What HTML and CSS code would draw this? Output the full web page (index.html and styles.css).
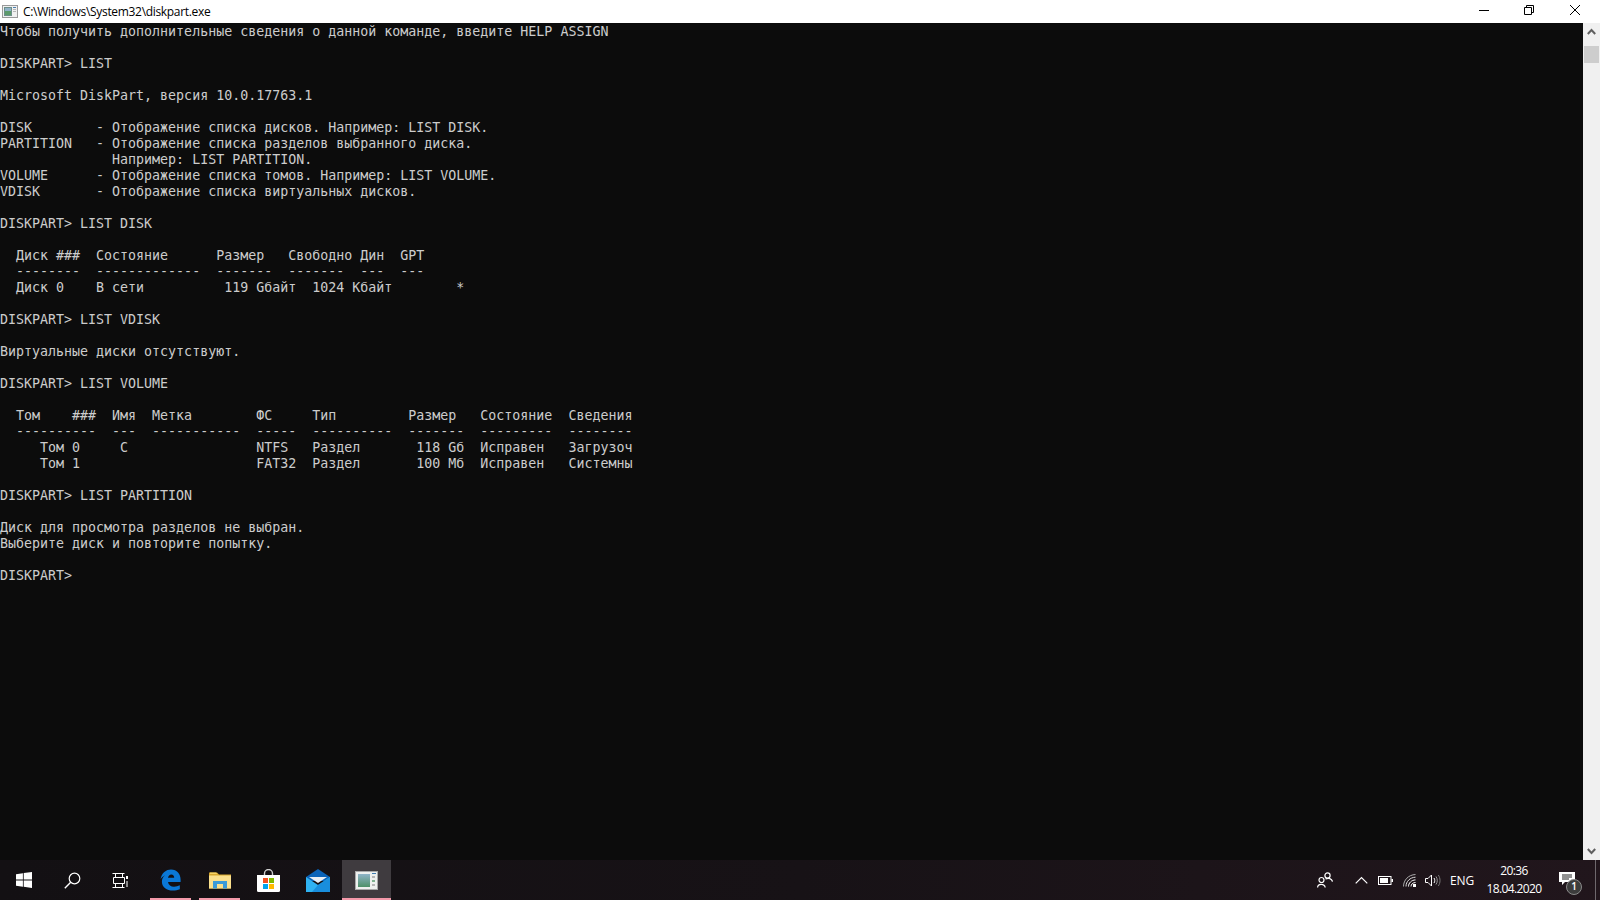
FILE: index.html
```html
<!DOCTYPE html>
<html lang="ru">
<head>
<meta charset="utf-8">
<title>C:\Windows\System32\diskpart.exe</title>
<link rel="stylesheet" href="styles.css">
</head>
<body>
<header class="titlebar">
  <svg class="app-icon" width="16" height="13" viewBox="0 0 16 13"><rect x="0" y="0" width="16" height="13" fill="#9a9a9a"/><rect x="1" y="1" width="14" height="11" fill="#f0f0f0"/><rect x="2" y="2" width="8" height="9" fill="#6d8f8a"/><rect x="3" y="3" width="6" height="3" fill="#8fb2c9"/><rect x="3" y="6" width="6" height="4" fill="#5c9a6a"/><rect x="11" y="2" width="3" height="1" fill="#4a7fb0"/><rect x="11" y="4" width="3" height="1" fill="#b5b5b5"/><rect x="11" y="6" width="3" height="1" fill="#b5b5b5"/></svg>
  <span class="title-text">C:\Windows\System32\diskpart.exe</span>
  <div class="win-controls">
    <div class="win-btn win-min"><svg width="10" height="10" viewBox="0 0 10 10"><path d="M0 5.500H10" stroke="#000" fill="none"/></svg></div>
    <div class="win-btn"><svg width="10" height="10" viewBox="0 0 10 10"><path d="M.5 2.500h7v7h-7zM2.500 2.500v-2h7v7h-2" stroke="#000" fill="none"/></svg></div>
    <div class="win-btn"><svg width="10" height="10" viewBox="0 0 10 10"><path d="M0 0L10 10M10 0L0 10" stroke="#000" fill="none"/></svg></div>
  </div>
</header>
<main class="window">
<pre class="console">Чтобы получить дополнительные сведения о данной команде, введите HELP ASSIGN

DISKPART&gt; LIST

Microsoft DiskPart, версия 10.0.17763.1

DISK        - Отображение списка дисков. Например: LIST DISK.
PARTITION   - Отображение списка разделов выбранного диска.
              Например: LIST PARTITION.
VOLUME      - Отображение списка томов. Например: LIST VOLUME.
VDISK       - Отображение списка виртуальных дисков.

DISKPART&gt; LIST DISK

  Диск ###  Состояние      Размер   Свободно Дин  GPT
  --------  -------------  -------  -------  ---  ---
  Диск 0    В сети          119 Gбайт  1024 Кбайт        *

DISKPART&gt; LIST VDISK

Виртуальные диски отсутствуют.

DISKPART&gt; LIST VOLUME

  Том    ###  Имя  Метка        ФС     Тип         Размер   Состояние  Сведения
  ----------  ---  -----------  -----  ----------  -------  ---------  --------
     Том 0     C                NTFS   Раздел       118 Gб  Исправен   Загрузоч
     Том 1                      FAT32  Раздел       100 Мб  Исправен   Системны

DISKPART&gt; LIST PARTITION

Диск для просмотра разделов не выбран.
Выберите диск и повторите попытку.

DISKPART&gt;</pre>
  <aside class="scrollbar">
    <div class="sb-btn"><svg width="9" height="7" viewBox="0 0 9 7"><path d="M.8 6L4.500 2l3.700 4" stroke="#606060" stroke-width="2" fill="none"/></svg></div>
    <div class="sb-thumb"></div>
    <div class="sb-btn sb-down"><svg width="9" height="7" viewBox="0 0 9 7"><path d="M.8 1L4.500 5l3.700-4" stroke="#606060" stroke-width="2" fill="none"/></svg></div>
  </aside>
</main>
<footer class="taskbar">
  <div class="tb-btn">
    <svg width="16" height="16" viewBox="0 0 16 16"><path fill="#fff" d="M0 2.300l6.900-1v6.200H0zM7.700 1.100L16 0v7.500H7.700zM0 8.400h6.900v6.300l-6.900-1zM7.700 8.400H16V16l-8.300-1.200z"/></svg>
  </div>
  <div class="tb-btn">
    <svg width="17" height="17" viewBox="0 0 17 17"><circle cx="10.500" cy="6.500" r="5.300" stroke="#fff" stroke-width="1.200" fill="none"/><path d="M6.700 10.300L.8 16.200" stroke="#fff" stroke-width="1.400"/></svg>
  </div>
  <div class="tb-btn">
    <svg width="16" height="15" viewBox="0 0 16 15"><path d="M.5 .5h12M.5 14.500h12M1.500 4.500h11v6h-11zM3.500 1v3M10.500 1v3M3.500 11v3M10.500 11v3" stroke="#fff" fill="none"/><rect x="14" y="3" width="2" height="3" fill="#fff"/><rect x="14.500" y="8" width="1" height="6" fill="#fff"/></svg>
  </div>
  <div class="tb-gap"></div>
  <div class="app-btn running">
    <svg width="21" height="22" viewBox="0 0 21 22"><path fill="#0a78d7" fill-rule="evenodd" d="M.6 10C1.600 3.700 6.200.4 11 .4c6 0 9.600 4.300 9.600 10.300V13H8c.4 3.200 2.900 4.700 6 4.700 2.100 0 4.100-.5 5.800-1.400v4c-2 .9-4.400 1.300-6.900 1.300-6 0-11-3.600-11-8.900 0-2.700 1.100-4.800 3.200-6.400C3.500 7 1.900 8.400.6 10zM8 8.800h6.200c0-2-1-3.400-2.900-3.400-1.700 0-2.900 1.300-3.300 3.400z"/></svg>
  </div>
  <div class="app-btn running">
    <svg width="22" height="18" viewBox="0 0 22 18"><path fill="#d8a72e" d="M0 1.500h8l2 2h12v14H0z"/><path fill="#fbe08d" d="M0 4.500h22v13H0z"/><path fill="#f6d365" d="M1 1.500h6l1.500 1.500H1z"/><path fill="#3b9bd9" d="M4 17.500V10h14v7.500h-4V13H8v4.500z"/></svg>
  </div>
  <div class="app-btn">
    <svg width="23" height="23" viewBox="0 0 23 23"><path d="M7.500 8V4.500a4 4 0 0 1 8 0V8" stroke="#cfcfcf" stroke-width="1.400" fill="none"/><path fill="#fff" d="M0 6h23v15.500a1.500 1.500 0 0 1-1.500 1.500h-20A1.500 1.500 0 0 1 0 21.500z"/><rect x="6" y="9" width="5" height="5" fill="#f25022"/><rect x="12" y="9" width="5" height="5" fill="#7fba00"/><rect x="6" y="15" width="5" height="5" fill="#00a4ef"/><rect x="12" y="15" width="5" height="5" fill="#ffb900"/></svg>
  </div>
  <div class="app-btn">
    <svg width="24" height="23" viewBox="0 0 24 23"><path fill="#0a63b8" d="M0 8L12 0l12 8v4H0z"/><path fill="#e8eef4" d="M3 8h18l-9 6z"/><path fill="#2fb2f2" d="M0 8l12 8 12-8v15H0z"/><path fill="#0f7fd4" d="M6 23l6-7 12-8v15z" opacity=".7"/></svg>
  </div>
  <div class="app-btn running active">
    <svg width="23" height="19" viewBox="0 0 23 19"><defs><linearGradient id="consoleImage" x1="0" y1="0" x2="0" y2="1"><stop offset="0" stop-color="#8fb4c8"/><stop offset="1" stop-color="#4e9168"/></linearGradient></defs><rect width="23" height="19" fill="#a9a9a9"/><rect x="1" y="1" width="21" height="17" fill="#eef0ee"/><rect x="3" y="3" width="12" height="13" fill="url(#consoleImage)"/><rect x="17" y="2" width="4" height="1" fill="#3f7cb0"/><rect x="17" y="5" width="3" height="2" fill="#b5b5b5"/><rect x="17" y="9" width="3" height="2" fill="#7fb18f"/><rect x="17" y="13" width="3" height="2" fill="#b5b5b5"/></svg>
  </div>
  <div class="tray">
    <div class="tray-item people">
      <svg width="16" height="16" viewBox="0 0 16 16"><circle cx="10.500" cy="3.500" r="2.600" stroke="#fff" stroke-width="1.200" fill="none"/><circle cx="4.500" cy="8" r="2.500" stroke="#fff" stroke-width="1.200" fill="none"/><path d="M.6 15.500c0-4.300 7-4.300 7.600 0M8.500 7c3-1.500 6.300-.5 7 2.500" stroke="#fff" stroke-width="1.200" fill="none"/></svg>
    </div>
    <div class="tray-item">
      <svg width="13" height="8" viewBox="0 0 13 8"><path d="M.7 7.300L6.500 1.500l5.800 5.800" stroke="#fff" stroke-width="1.200" fill="none"/></svg>
    </div>
    <div class="tray-item">
      <svg width="15" height="9" viewBox="0 0 15 9"><rect x=".5" y=".5" width="12.500" height="8" stroke="#fff" fill="none"/><rect x="2" y="2" width="8" height="5" fill="#fff"/><rect x="13.500" y="3" width="1.500" height="3" fill="#fff"/></svg>
    </div>
    <div class="tray-item wifi">
      <svg width="14" height="13" viewBox="0 0 14 13"><path d="M.5 12.500C.5 6 5.500.8 12.500.5" stroke="#aaa" fill="none"/><path d="M3 12.500C3 7.500 7 3.400 12.500 3.200" stroke="#ddd" fill="none"/><path d="M5.500 12.500C5.500 9 8.500 6 12.500 5.900" stroke="#fff" fill="none"/><path d="M8 12.500c0-2 1.500-3.800 4.500-4" stroke="#fff" fill="none"/><rect x="10" y="10" width="3" height="3" fill="#fff"/></svg>
    </div>
    <div class="tray-item">
      <svg width="16" height="13" viewBox="0 0 16 13"><path d="M.5 4.500h2.500l3.500-3.500v11L3 8.500H.5z" stroke="#fff" fill="none"/><path d="M9 4c1 1.500 1 3.500 0 5" stroke="#fff" fill="none"/><path d="M11 2.500c1.700 2.500 1.700 5.500 0 8" stroke="#999" fill="none"/><path d="M13.300 1c2.300 3.200 2.300 7.800 0 11" stroke="#777" fill="none"/></svg>
    </div>
    <div class="tray-lang">ENG</div>
    <div class="clock"><span>20:36</span><span>18.04.2020</span></div>
    <div class="notify">
      <svg class="notify-icon" width="16" height="13" viewBox="0 0 16 13"><path fill="#fff" d="M0 0h16v10H6l-3 3v-3H0z"/><path d="M3 3h10M3 5h10M3 7h7" stroke="#222"/></svg>
      <span class="badge">1</span>
    </div>
    <div class="show-desktop"></div>
  </div>
</footer>
</body>
</html>
```
FILE: styles.css
```css
* { box-sizing: border-box; }
html, body { margin: 0; padding: 0; height: 100%; overflow: hidden; }
body {
  width: 1600px;
  height: 900px;
  display: flex;
  flex-direction: column;
  background: #0c0c0c;
  font-family: "Open Sans", "Liberation Sans", sans-serif;
}
.titlebar {
  height: 23px;
  flex: none;
  display: flex;
  align-items: center;
  background: #fff;
  padding-left: 2px;
  padding-right: 2px;
}
.app-icon { flex: none; }
.title-text {
  margin-left: 5px;
  font-family: "Open Sans", sans-serif;
  font-size: 12px;
  letter-spacing: -0.32px;
  color: #000;
  white-space: nowrap;
}
.win-controls { margin-left: auto; display: flex; height: 100%; }
.win-btn { width: 46px; padding-bottom: 3px; display: flex; align-items: center; justify-content: center; }
.win-min { width: 44px; }
.window { flex: 1; min-height: 0; display: flex; }
.console {
  flex: 1;
  margin: 0;
  padding-top: 1px;
  overflow: hidden;
  background: #0c0c0c;
  color: #cccccc;
  font-family: "DejaVu Sans Mono", "Liberation Mono", monospace;
  font-size: 13.3px;
  line-height: 16px;
}
.scrollbar {
  width: 17px;
  flex: none;
  display: flex;
  flex-direction: column;
  background: #f0f0f0;
}
.sb-btn { height: 17px; flex: none; display: flex; align-items: center; justify-content: center; }
.sb-thumb { height: 17px; margin: 6px 1px 0; background: #cdcdcd; }
.sb-down { margin-top: auto; }
.taskbar {
  height: 40px;
  flex: none;
  display: flex;
  background: linear-gradient(90deg, #131013 0%, #171216 50%, #21161c 100%);
}
.tb-btn { width: 48px; display: flex; align-items: center; justify-content: center; }
.tb-gap { width: 2px; }
.app-btn {
  width: 49px;
  position: relative;
  display: flex;
  align-items: center;
  justify-content: center;
}
.app-btn.running::after {
  content: "";
  position: absolute;
  left: 4px;
  right: 4px;
  bottom: 0;
  height: 2px;
  background: #f49aaa;
}
.app-btn.active { background: #3f3b3f; }
.app-btn.active::after { left: 0; right: 0; }
.tray { margin-left: auto; display: flex; color: #fff; }
.tray-item { width: 24px; display: flex; align-items: center; justify-content: center; }
.people { margin-right: 12px; }
.wifi { padding-left: 2px; }
.tray-lang {
  width: 34px;
  display: flex;
  align-items: center;
  justify-content: center;
  font-size: 12px;
  letter-spacing: -0.2px;
}
.clock {
  width: 73px;
  padding-right: 3px;
  padding-bottom: 1px;
  display: flex;
  flex-direction: column;
  align-items: center;
  justify-content: center;
  font-size: 12px;
  line-height: 18px;
  letter-spacing: -0.6px;
}
.notify {
  width: 43px;
  padding-right: 13px;
  position: relative;
  display: flex;
  align-items: center;
  justify-content: center;
}
.notify-icon { margin-bottom: 3px; }
.badge {
  position: absolute;
  left: 14px;
  top: 19px;
  width: 16px;
  height: 16px;
  border-radius: 50%;
  border: 1.5px solid #8a8a8a;
  background: #3c3c3c;
  font-size: 10px;
  font-weight: 600;
  line-height: 13px;
  text-align: center;
  color: #fff;
}
.show-desktop { width: 5px; border-left: 1px solid #6e686c; }
```
